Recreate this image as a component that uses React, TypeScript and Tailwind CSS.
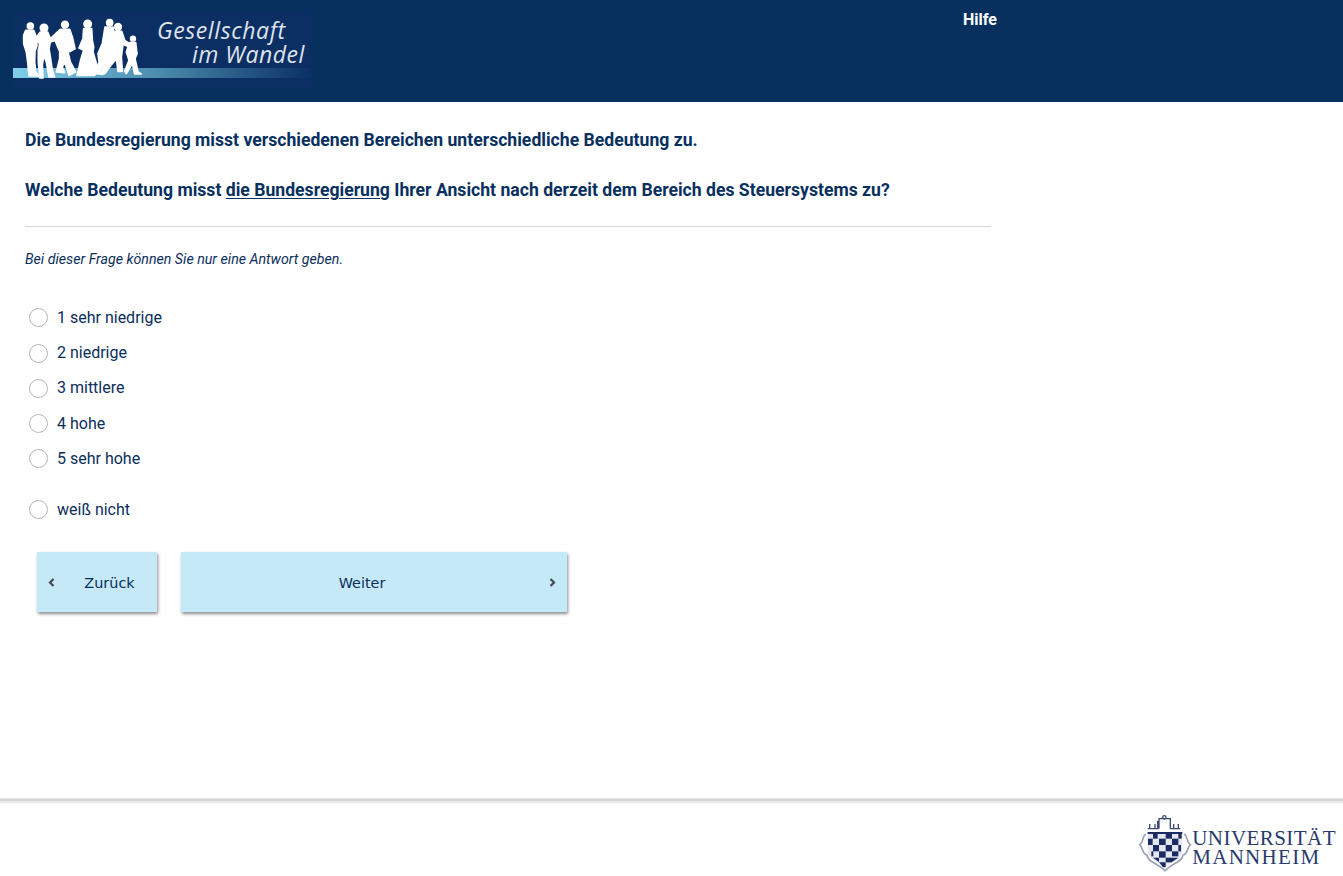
const answers = ["1 sehr niedrige", "2 niedrige", "3 mittlere", "4 hohe", "5 sehr hohe"];

function Radio({ label, className = "" }: { label: string; className?: string }) {
  return (
    <label className={`flex h-[35.2px] items-center ${className}`}>
      <span className="ml-[4px] h-[19px] w-[19px] rounded-full border border-[#b5b5b5] bg-white" />
      <span className="ml-[9px] text-[16px] text-[#0b2e5c]">{label}</span>
    </label>
  );
}

function Figures() {
  return (
    <svg width="135" height="72" viewBox="0 0 405 216" className="absolute left-0 top-[2px]" fill="#fff" stroke="#fff" strokeWidth="5" strokeLinejoin="round">
      {/* Familie als Silhouette */}
      <circle cx="52" cy="42" r="9" />
      <path d="M38 55 L62 55 L70 75 L72 100 L66 118 L65 150 L68 178 L76 192 L48 192 L44 150 L40 120 L32 95 L32 70 Z" />
      <circle cx="93" cy="48" r="11" />
      <path d="M82 60 L104 60 L112 80 L125 85 L112 90 L108 110 L112 135 L118 175 L125 195 L108 195 L100 150 L92 130 L88 160 L90 198 L80 198 L76 150 L76 115 L80 95 L66 80 Z" />
      <circle cx="156" cy="38" r="10" />
      <path d="M142 52 L170 52 L178 75 L186 110 L172 118 L165 120 L172 150 L188 180 L168 190 L155 150 L148 165 L155 182 L130 180 L140 140 L140 118 L126 85 L110 90 L108 84 L128 65 Z" />
      <circle cx="224" cy="36" r="11" />
      <path d="M212 50 L236 50 L238 85 L242 105 L240 120 L255 170 L245 190 L192 190 L204 140 L212 115 L198 108 L210 80 Z" />
      <circle cx="290" cy="32" r="9" />
      <path d="M276 45 L300 45 L305 90 L300 125 L285 135 L262 175 L270 187 L250 185 L258 150 L255 125 L268 95 Z" />
      <circle cx="315" cy="45" r="10" />
      <path d="M302 58 L326 58 L335 85 L365 105 L360 110 L330 97 L325 135 L328 178 L315 178 L310 140 L290 165 L275 185 L265 180 L285 140 L295 110 Z" />
      <circle cx="360" cy="80" r="7" />
      <path d="M350 92 L368 92 L372 125 L366 140 L375 180 L385 186 L365 186 L358 155 L340 185 L335 178 L348 145 L340 120 Z" />
    </svg>
  );
}

function LogoGesellschaft() {
  return (
    <div className="relative ml-[13px] mt-[10px] h-[78px] w-[300px] overflow-hidden bg-[#0b2f63]">
      <div className="absolute left-0 top-[58px] h-[10px] w-[300px] bg-gradient-to-r from-[#7fd0e8] via-[#4a89ab] via-50% to-[#0b2f63]" />
      <Figures />
      <div className="absolute left-[144px] top-[9px] font-['Open_Sans',sans-serif] text-[23px] italic leading-[22px] tracking-[0.6px] text-[#dfe4ec]">
        Gesellschaft
      </div>
      <div className="absolute left-[179px] top-[33px] font-['Open_Sans',sans-serif] text-[23px] italic leading-[22px] tracking-[0.5px] text-[#dfe4ec]">
        im Wandel
      </div>
    </div>
  );
}

const dark = [
  [60, 64, 14, 16], [98, 64, 19, 16], [136, 64, 10, 16],
  [78, 80, 20, 19], [117, 80, 19, 19],
  [45, 80, 14, 19], [60, 99, 18, 19], [98, 99, 19, 19], [136, 99, 8, 19],
  [78, 118, 20, 19], [117, 118, 19, 15], [55, 118, 6, 15], [98, 137, 19, 14],
];

function Wappen() {
  return (
    <svg width="62" height="62" viewBox="0 0 186 186" className="shrink-0">
      <g fill="none" stroke="#3d4a75" strokeWidth="4">
        <path d="M44 50 H74 V28 H78 M78 50 V20 H112 V50 M112 50 V28 M112 50 H142 M50 36 V50 M66 36 V50 M122 36 V50 M136 36 V50" />
        <circle cx="94" cy="16" r="5" />
      </g>
      <path
        d="M38 66 C26 74 34 88 20 98 C32 110 26 124 42 130 C46 152 70 150 96 176 C122 150 146 152 150 130 C166 124 160 110 172 98 C158 88 166 74 154 66"
        fill="none"
        stroke="#9aa2b8"
        strokeWidth="5"
      />
      <path d="M44 60 H148 V116 C148 138 120 148 96 166 C72 148 44 138 44 116 Z" fill="#e4e7f0" />
      <g fill="#1d2b63">
        <path d="M44 60 H148 V66 H44 Z" />
        {dark.map(([x, y, w, h]) => (
          <rect key={`${x}-${y}`} x={x} y={y} width={w} height={h} />
        ))}
        <path d="M60 137 L78 137 L78 150 Z M117 137 H136 L117 150 Z M78 151 H98 V166 H90 Z" />
      </g>
    </svg>
  );
}

function Chevron({ dir }: { dir: "left" | "right" }) {
  return (
    <svg width="7" height="9" viewBox="0 0 7 9" fill="none" stroke="#444b55" strokeWidth="2.2" className="absolute top-[26px]" style={dir === "left" ? { left: 11 } : { right: 11 }}>
      <path d={dir === "left" ? "M5.5 1 L2 4.5 L5.5 8" : "M1.5 1 L5 4.5 L1.5 8"} />
    </svg>
  );
}

export default function App() {
  return (
    <div className="flex h-[876px] flex-col bg-white font-['Roboto',sans-serif]">
      <header className="relative flex h-[102px] shrink-0 bg-[#08305f]">
        <LogoGesellschaft />
        <a className="ml-[650px] mt-[10px] h-fit text-[16px] font-bold leading-[19px] text-white">Hilfe</a>
      </header>

      <main className="w-[991px] flex-1 pl-[25px]">
        <h1 className="mt-[28px] text-[17.63px] font-bold leading-[21px] text-[#08305f]">
          Die Bundesregierung misst verschiedenen Bereichen unterschiedliche Bedeutung zu.
        </h1>
        <h2 className="mt-[29px] text-[17.63px] font-bold leading-[21px] text-[#08305f]">
          Welche Bedeutung misst <span className="underline underline-offset-2">die Bundesregierung</span> Ihrer Ansicht nach derzeit dem Bereich des Steuersystems zu?
        </h2>
        <hr className="mt-[25px] border-t border-[#d6d6d6]" />
        <p className="mt-[24px] text-[14.2px] italic leading-[16px] text-[#0b2e5c]">
          Bei dieser Frage können Sie nur eine Antwort geben.
        </p>

        <div className="mt-[33.4px]">
          {answers.map((a) => (
            <Radio key={a} label={a} />
          ))}
          <Radio label="weiß nicht" className="mt-[15.6px]" />
        </div>

        <div className="ml-[12px] mt-[25px] flex gap-[24px] font-['DejaVu_Sans',sans-serif] text-[14.4px] text-[#0b2e5c]">
          <button type="button" className="relative h-[60px] w-[120px] bg-[#c5e9f6] pl-[25px] pt-[3px] shadow-[1px_2px_3px_rgba(0,0,0,0.45)]">
            <Chevron dir="left" />
            Zurück
          </button>
          <button type="button" className="relative h-[60px] w-[386px] bg-[#c5e9f6] pr-[24px] pt-[3px] shadow-[1px_2px_3px_rgba(0,0,0,0.45)]">
            Weiter
            <Chevron dir="right" />
          </button>
        </div>
      </main>

      <footer className="flex h-[77px] shrink-0 justify-end border-t-[2px] border-[#d4d4d4] pr-[7px] shadow-[0_-1px_1px_#e8e8e8,inset_0_3px_1px_-1px_#e8e8e8]">
        <div className="mt-[11px] flex h-fit items-start">
          <Wappen />
          <div className="-ml-[3px] mt-[17px] font-['Liberation_Serif',serif] text-[21px] leading-[19px] text-[#2a3a6e]">
            <div className="tracking-[0.45px]">UNIVERSITÄT</div>
            <div className="tracking-[1.3px]">MANNHEIM</div>
          </div>
        </div>
      </footer>
    </div>
  );
}
